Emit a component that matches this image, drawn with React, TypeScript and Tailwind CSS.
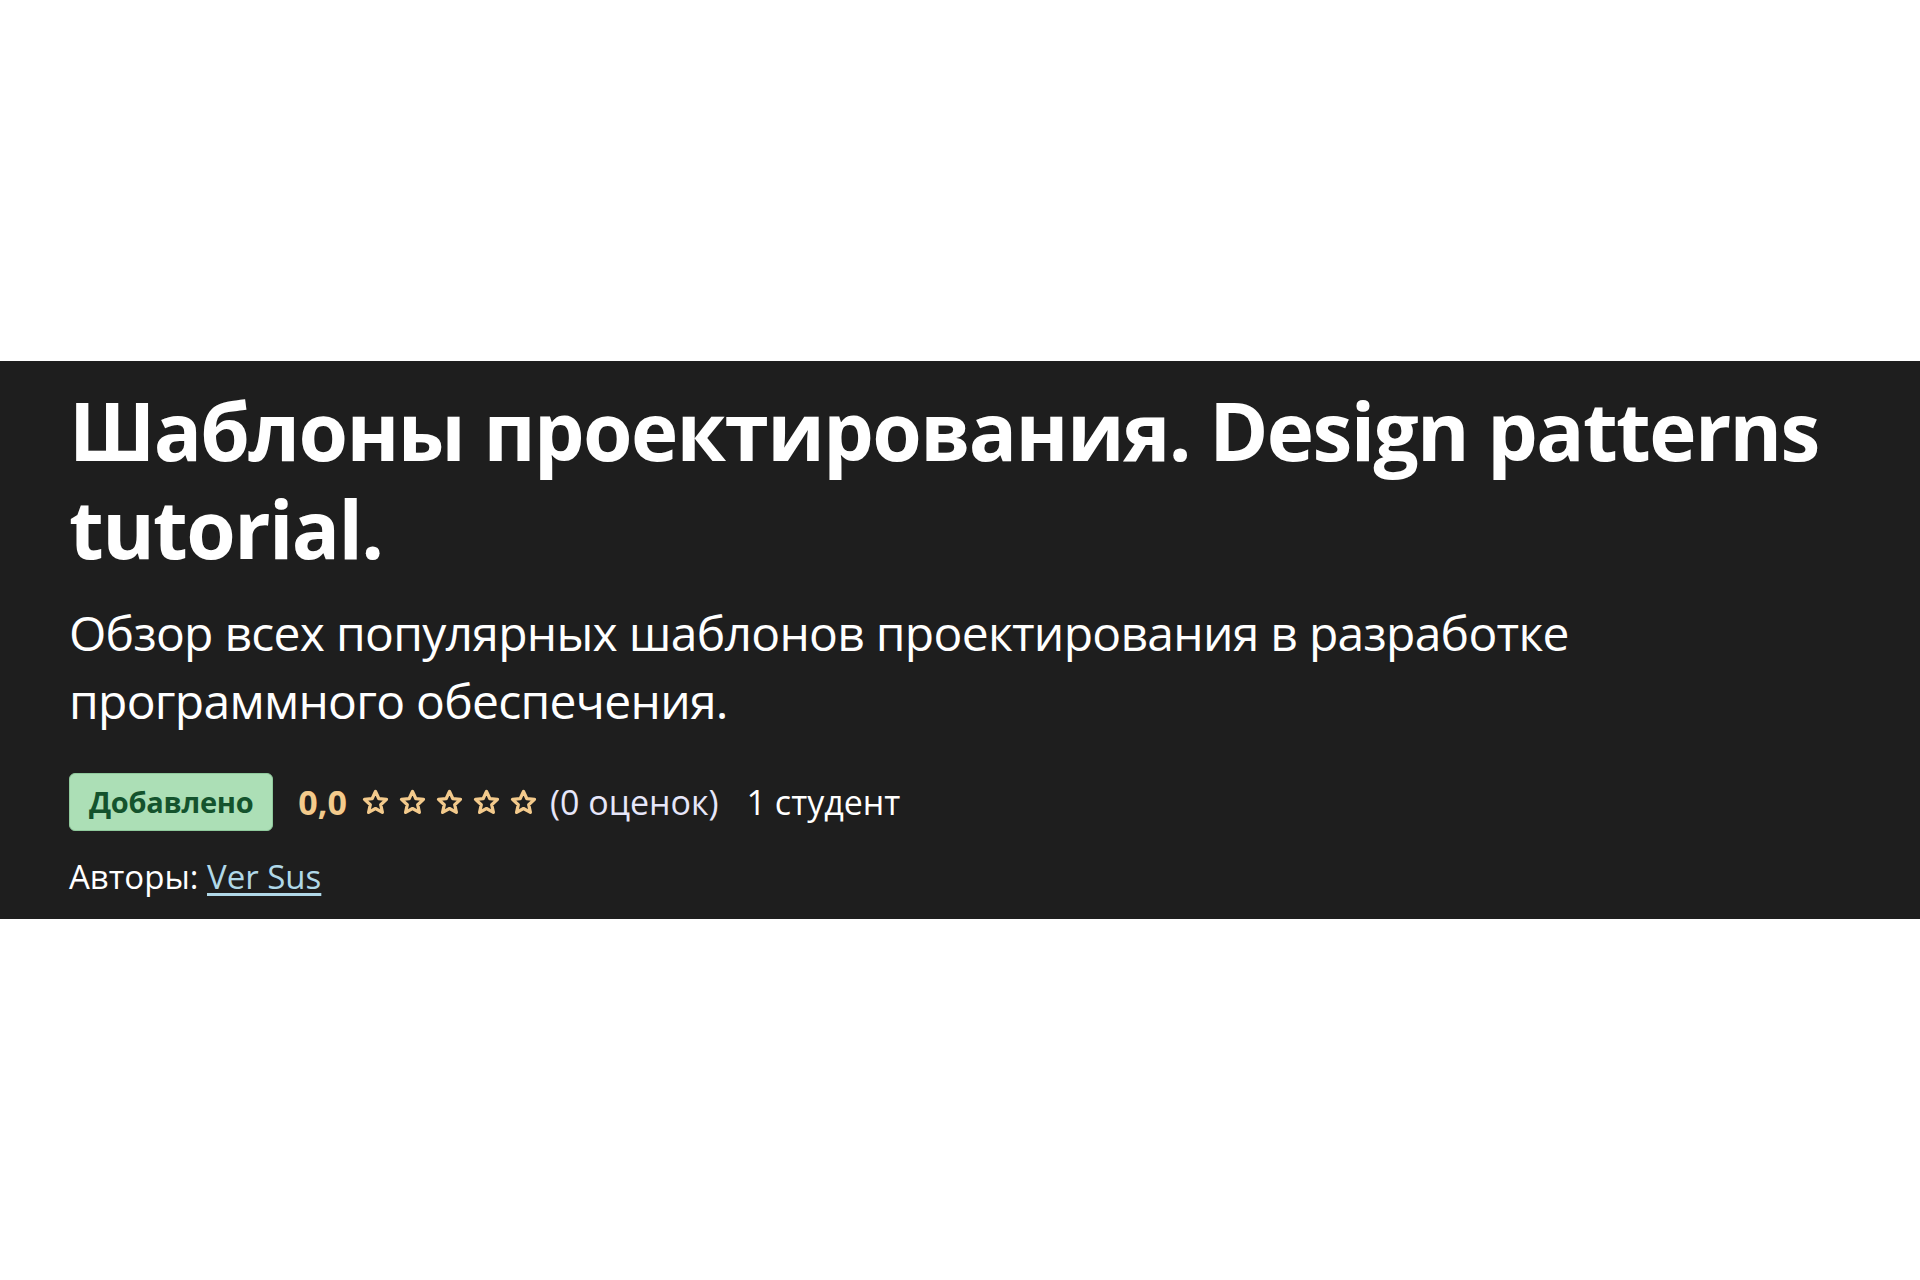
const Star = () => (
  <svg width="29" height="29" viewBox="0 0 24 24" className="shrink-0">
    <path
      d="M12 2.8l2.7 5.9 6.4.7-4.8 4.4 1.4 6.4L12 17l-5.7 3.2 1.4-6.4-4.8-4.4 6.4-.7z"
      fill="none"
      stroke="#f3ca8c"
      strokeWidth="2.7"
      strokeLinejoin="round"
    />
  </svg>
);

const Rating = () => (
  <div className="flex items-center">
    <span className="text-[34px] font-bold text-[#f3ca8c] mr-[14px]">0,0</span>
    <div className="flex items-center gap-[8px]">
      <Star />
      <Star />
      <Star />
      <Star />
      <Star />
    </div>
    <span className="ml-[12px] text-[#e6e6fa]">(0 оценок)</span>
    <span className="ml-[28px] text-white">1 студент</span>
  </div>
);

export default function App() {
  return (
    <div className="min-h-screen bg-white pt-[361px] font-['Open_Sans',sans-serif]">
      <div className="bg-[#1e1e1e] px-[69px] pt-[20px] pb-[22px] text-white">
        <h1 className="text-[80px] leading-[98px] font-bold tracking-[-0.02em] max-w-[1800px]">
          Шаблоны проектирования. Design patterns tutorial.
        </h1>
        <p className="mt-[22px] text-[48px] leading-[68px] tracking-[-0.015em] max-w-[1600px]">
          Обзор всех популярных шаблонов проектирования в разработке
          программного обеспечения.
        </p>
        <div className="mt-[38px] flex items-center text-[34px]">
          <span className="rounded-md border border-[#8fc99c] bg-[#acdfb6] px-[19px] h-[58px] flex items-center text-[29px] font-bold tracking-[-0.01em] text-[#14532d] mr-[25px]">
            Добавлено
          </span>
          <Rating />
        </div>
        <div className="mt-[26px] text-[33px] leading-[40px]">
          Авторы:{' '}
          <a href="#" className="text-[#b0d8e8] underline underline-offset-4">
            Ver Sus
          </a>
        </div>
      </div>
    </div>
  );
}
